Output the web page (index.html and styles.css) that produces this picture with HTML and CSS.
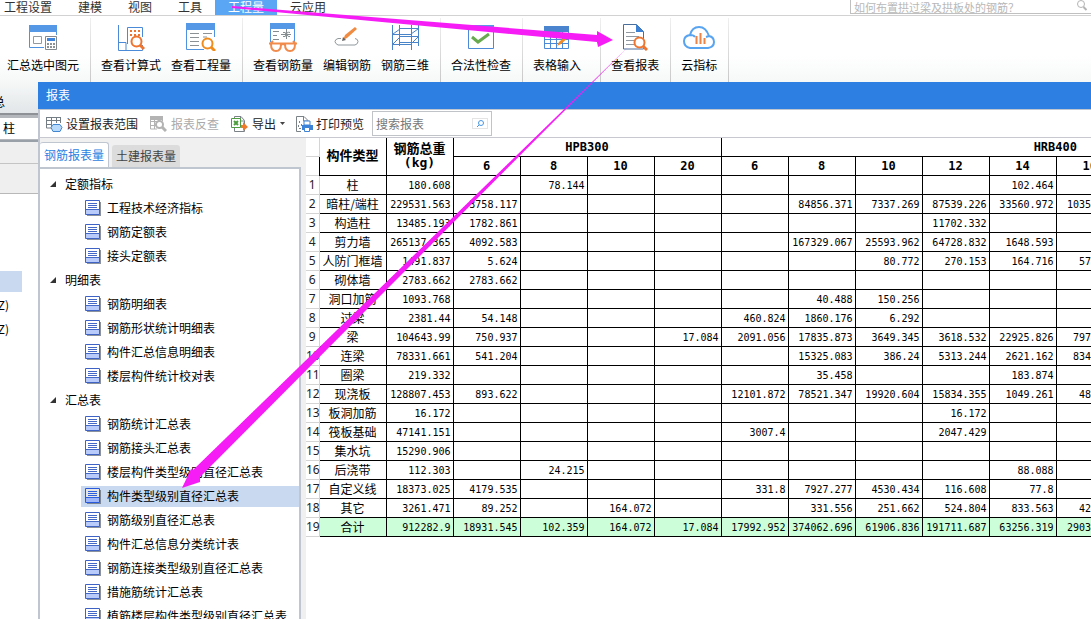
FILE: index.html
```html
<!DOCTYPE html>
<html lang="zh-CN">
<head>
<meta charset="utf-8">
<title>报表</title>
<link rel="stylesheet" href="styles.css">
</head>
<body>
<svg class="defs" aria-hidden="true">
  <symbol id="doc" viewBox="0 0 16 16"><path d="M2 2h14v14H2z" fill="#8d939d"/><path d="M.5.5h14v14H.5z" fill="#fff" stroke="#3f63c4"/><path d="M1 10h13v4H1z" fill="#b9cbfb"/><path d="M1 9.500h13M3 3.500h9M3 5.500h9M3 7.500h9" stroke="#4468c6"/></symbol>
</svg>
<div class="app">
  <header class="menubar">
    <nav class="menu">
      <button>工程设置</button><button>建模</button><button>视图</button><button>工具</button><button class="active">工程量</button><button>云应用</button>
    </nav>
    <div class="help-search">
      <input type="text" aria-label="帮助搜索" placeholder="如何布置拱过梁及拱板处的钢筋？">
      <svg width="12" height="12" viewBox="0 0 12 12" fill="none" stroke="#b4b4b4"><circle cx="5" cy="4" r="3.500"/><path d="M7.500 7l3 3" stroke-width="2"/></svg>
    </div>
  </header>

  <div class="ribbon">
    <div class="group">
      <button class="tool"><svg width="28" height="28" viewBox="0 0 28 28" fill="none"><path d="M.5 7v17.500H15M27.500 7v5" stroke="#4f92e0"/><path d="M0 2h28v7H0z" fill="#5598e6"/><path d="M4.500 13.500h8v7h-8z" stroke="#93999d"/><path d="M16.500 13.500h11v13h-11z" fill="#fff" stroke="#84898d"/><path d="M18 15h8v3h-8z" fill="#3f84dc"/><path d="M18 20h2v2h-2zm3 0h2v2h-2zm3 0h2v2h-2zm-6 3h2v2h-2zm3 0h2v2h-2zm3 0h2v2h-2z" fill="#8b9195"/></svg>汇总选中图元</button>
    </div>
    <div class="group">
      <button class="tool"><svg width="28" height="28" viewBox="0 0 28 28" fill="none"><path d="M1.500 2v25.500h24V22M1 19.500h8v8M10.500 21V4.500h15V14" stroke="#4a8ad6"/><path d="M13 7h2v2h-2zm4 0h2v2h-2zm4 0h2v2h-2zm-8 4h2v2h-2zm4 0h2v2h-2zm4 0h2v2h-2z" fill="#ee7530"/><circle cx="19.500" cy="18.500" r="5" fill="#fff" stroke="#ee7530" stroke-width="2"/><path d="M23 22l4 4" stroke="#ee7530" stroke-width="3"/></svg>查看计算式</button>
      <button class="tool"><svg width="30" height="28" viewBox="0 0 30 28" fill="none"><path d="M.5 6v20.500H18M28.500 6v8" stroke="#4f92e0"/><path d="M0 0h29v7H0z" fill="#5598e6"/><path d="M4 10.500h9M17 10.500h9M4 14.500h9M4 18.500h9M4 22.500h9M17 14h4" stroke="#8b9195"/><circle cx="21.500" cy="20.500" r="5" fill="#fff" stroke="#f08c1c" stroke-width="2"/><path d="M25 24l4 4" stroke="#f08c1c" stroke-width="3"/></svg>查看工程量</button>
    </div>
    <div class="group">
      <button class="tool"><svg width="30" height="30" viewBox="0 0 30 30" fill="none"><path d="M2.500 5v14M26.500 5v14" stroke="#4f92e0"/><path d="M2 0h25v6H2z" fill="#5598e6"/><path d="M5 8.500h6M5 12.500h4M5 16.500h6M13 11.500h10M18.500 6v10M15 9.500q3-1 3 2t-3 2M22 9.500q-4-1-3 2t3 2" stroke="#858c90"/><path d="M1 20.500h28M3 20l2-2M27 20l-2-2M3 21q0 7 5 7t5-7M17 21q0 7 5 7t5-7M13 22q2-2 4 0" stroke="#f08b4b" stroke-width="2"/></svg>查看钢筋量</button>
      <button class="tool"><svg width="28" height="28" viewBox="0 0 28 28" fill="none"><path d="M8 15.500H5q-3 1-3 3t3 3.500h17q3-1 3-3.500t-3-3" stroke="#90989c"/><path d="M10 17l2-5L22 4l2 2-10 9z" fill="#f08b42"/><path d="M9 18l1-4 3 3z" fill="#666"/></svg>编辑钢筋</button>
      <button class="tool"><svg width="28" height="28" viewBox="0 0 28 28" fill="none" stroke="#4a84c8"><path d="M1.500 2v25M8.500 2v21M20.500 2v25M27.500 2v21M9 5.500h19M1 11.500h20M8 13.500h20M1 21.500h20M8 19.500h20M2 11l7-5M20 11l7-5M2 21l7-7M20 21l7-7"/></svg>钢筋三维</button>
    </div>
    <div class="group">
      <button class="tool"><svg width="26" height="28" viewBox="0 0 26 28" fill="none"><path d="M.5 3.500h25v22H.5z" fill="#fff" stroke="#4a8ad6"/><path d="M0 2h26v4H0z" fill="#5598e6"/><path d="M4 14l6 5L21 11" stroke="#68a84e" stroke-width="3"/></svg>合法性检查</button>
    </div>
    <div class="group wide">
      <button class="tool"><svg width="26" height="28" viewBox="0 0 26 28" fill="none"><path d="M.5 4.500h24v21H.5zM1 12.500h23M1 16.500h23M1 20.500h23M6.500 8v17M12.500 8v17M18.500 8v17" stroke="#4a8ad6"/><path d="M0 3h25v6H0z" fill="#4a84cf"/><path d="M13 23l2-4 8-7 2 2-8 7z" fill="#f28c24"/></svg>表格输入</button>
    </div>
    <div class="group">
      <button class="tool"><svg width="26" height="28" viewBox="0 0 26 28" fill="none"><path d="M1.500 1.500h13l7 7V26H1.500z" fill="#fff" stroke="#4a6e9c"/><path d="M14 1v8h8z" fill="#3b80d2"/><path d="M4 9.500h9M4 13.500h13M4 17.500h8M4 21.500h8" stroke="#9299a0"/><circle cx="17.500" cy="19.500" r="5" fill="#fff" stroke="#ee7530" stroke-width="2"/><path d="M21 23l4 4" stroke="#ee7530" stroke-width="3"/></svg>查看报表</button>
    </div>
    <div class="group">
      <button class="tool"><svg width="32" height="28" viewBox="0 0 32 28" fill="none"><path d="M7 25q-6-1-6-7 0-5 6-6Q9 4 16 4t10 9q5 1 5 6t-6 6zM7 12q4 0 5 2M26 13l-3 1" stroke="#58a4f0" stroke-width="2"/><path d="M13.500 13v8M17.500 10v11M21.500 15v6" stroke="#f08344" stroke-width="2"/></svg>云指标</button>
    </div>
  </div>

  <div class="workspace">
    <aside class="side">
      <div class="side-top"><span class="cut">总</span></div>
      <div class="side-box">柱</div>
      <div class="side-head"></div>
      <div class="side-row"></div>
      <div class="side-list">
        <div class="side-mark"></div>
        <span class="cut">KZ)</span>
        <span class="cut">KZ)</span>
      </div>
    </aside>

    <main class="dialog">
      <h1 class="title">报表</h1>
      <div class="toolbar">
        <button><svg width="17" height="16" viewBox="0 0 17 16" fill="none"><path d="M.5 1v11H6M5.500 1v11M10.500 1v6M14.500 1v6M0 1.500h15M0 4.500h15M0 8.500h6" stroke="#757d84"/><path d="M7 8.500h7l2 3-2 4H7l-2-4z" fill="#b9dafb" stroke="#4187d2"/></svg>设置报表范围</button>
        <button disabled><svg width="17" height="16" viewBox="0 0 17 16" fill="none" stroke="#b3b3b3"><path d="M0 2h13" stroke-width="4"/><path d="M.5 1v12H7M4.500 1v12M8.500 1v4M12.500 1v4M0 5.500h8M0 9.500h6"/><circle cx="9.500" cy="8.500" r="3.500" fill="#fff" stroke-width="2"/><path d="M12 11l4 4" stroke-width="3"/></svg>报表反查</button>
        <button><svg width="17" height="16" viewBox="0 0 17 16" fill="none"><path d="M3.500 3V.5H10l3.500 4V9M3.500 12v3.500h10V13M9.500 1v4H13" stroke="#7a8288"/><path d="M.5 2.500h9v9h-9z" fill="#fff" stroke="#4e9d3e"/><path d="M3 5l4 4M7 5L3 9" stroke="#4e9d3e" stroke-width="2"/><path d="M10 9h2V6l5 5-5 4v-3h-2z" fill="#ee7a2b"/></svg>导出<svg class="caret" width="5" height="3" viewBox="0 0 5 3"><path d="M0 0h5L2.500 3z" fill="#444"/></svg></button>
        <button><svg width="17" height="16" viewBox="0 0 17 16" fill="none"><path d="M5 15.500H.5V.5H8l4 4V6M7.500 1v4H12" stroke="#7a8288"/><path d="M3 5h1v2H3zm2 3h1v2H5zM2 9h1v2H2zm1 3h2v1H3z" fill="#7a8288"/><path d="M8 5h6v4H8z" fill="#fff" stroke="#3c83d8"/><path d="M6 9h11v5H6z" fill="#3c83d8"/><path d="M8.500 11.500h5v4h-5z" fill="#fff" stroke="#3c83d8"/></svg>打印预览</button>
        <div class="search">
          <input type="text" aria-label="搜索报表" placeholder="搜索报表">
          <button class="go" aria-label="搜索"><svg width="9" height="9" viewBox="0 0 9 9" fill="none" stroke="#4a95e0"><circle cx="5" cy="4" r="2.500"/><path d="M3 6L1 8"/></svg></button>
        </div>
      </div>

      <div class="content">
        <section class="nav">
          <div class="tabs"><button class="on">钢筋报表量</button><button>土建报表量</button></div>
          <div class="tree">
            <button class="branch">定额指标</button>
            <button class="leaf"><svg><use href="#doc"/></svg>工程技术经济指标</button>
            <button class="leaf"><svg><use href="#doc"/></svg>钢筋定额表</button>
            <button class="leaf"><svg><use href="#doc"/></svg>接头定额表</button>
            <button class="branch">明细表</button>
            <button class="leaf"><svg><use href="#doc"/></svg>钢筋明细表</button>
            <button class="leaf"><svg><use href="#doc"/></svg>钢筋形状统计明细表</button>
            <button class="leaf"><svg><use href="#doc"/></svg>构件汇总信息明细表</button>
            <button class="leaf"><svg><use href="#doc"/></svg>楼层构件统计校对表</button>
            <button class="branch">汇总表</button>
            <button class="leaf"><svg><use href="#doc"/></svg>钢筋统计汇总表</button>
            <button class="leaf"><svg><use href="#doc"/></svg>钢筋接头汇总表</button>
            <button class="leaf"><svg><use href="#doc"/></svg>楼层构件类型级别直径汇总表</button>
            <button class="leaf selected"><svg><use href="#doc"/></svg>构件类型级别直径汇总表</button>
            <button class="leaf"><svg><use href="#doc"/></svg>钢筋级别直径汇总表</button>
            <button class="leaf"><svg><use href="#doc"/></svg>构件汇总信息分类统计表</button>
            <button class="leaf"><svg><use href="#doc"/></svg>钢筋连接类型级别直径汇总表</button>
            <button class="leaf"><svg><use href="#doc"/></svg>措施筋统计汇总表</button>
            <button class="leaf"><svg><use href="#doc"/></svg>植筋楼层构件类型级别直径汇总表</button>
          </div>
        </section>

        <section class="report">
          <table>
            <colgroup><col class="c-no"><col class="c-val" span="11"><col></colgroup>
            <thead>
              <tr><td class="no"></td><th rowspan="2" class="label">构件类型</th><th rowspan="2" class="label">钢筋总重<br>(kg)</th><th colspan="4">HPB300</th><th colspan="6" class="grade-wide">HRB400</th></tr>
              <tr><td class="no"></td><th>6</th><th>8</th><th>10</th><th>20</th><th>6</th><th>8</th><th>10</th><th>12</th><th>14</th><th class="edge-head">16</th></tr>
            </thead>
            <tbody>
              <tr><td class="no">1</td><td class="type">柱</td><td>180.608</td><td></td><td>78.144</td><td></td><td></td><td></td><td></td><td></td><td></td><td>102.464</td><td></td></tr>
              <tr><td class="no">2</td><td class="type">暗柱/端柱</td><td>229531.563</td><td>3758.117</td><td></td><td></td><td></td><td></td><td>84856.371</td><td>7337.269</td><td>87539.226</td><td>33560.972</td><td>1035</td></tr>
              <tr><td class="no">3</td><td class="type">构造柱</td><td>13485.193</td><td>1782.861</td><td></td><td></td><td></td><td></td><td></td><td></td><td>11702.332</td><td></td><td></td></tr>
              <tr><td class="no">4</td><td class="type">剪力墙</td><td>265137.365</td><td>4092.583</td><td></td><td></td><td></td><td></td><td>167329.067</td><td>25593.962</td><td>64728.832</td><td>1648.593</td><td></td></tr>
              <tr><td class="no">5</td><td class="type">人防门框墙</td><td>1491.837</td><td>5.624</td><td></td><td></td><td></td><td></td><td></td><td>80.772</td><td>270.153</td><td>164.716</td><td>57</td></tr>
              <tr><td class="no">6</td><td class="type">砌体墙</td><td>2783.662</td><td>2783.662</td><td></td><td></td><td></td><td></td><td></td><td></td><td></td><td></td><td></td></tr>
              <tr><td class="no">7</td><td class="type">洞口加筋</td><td>1093.768</td><td></td><td></td><td></td><td></td><td></td><td>40.488</td><td>150.256</td><td></td><td></td><td></td></tr>
              <tr><td class="no">8</td><td class="type">过梁</td><td>2381.44</td><td>54.148</td><td></td><td></td><td></td><td>460.824</td><td>1860.176</td><td>6.292</td><td></td><td></td><td></td></tr>
              <tr><td class="no">9</td><td class="type">梁</td><td>104643.99</td><td>750.937</td><td></td><td></td><td>17.084</td><td>2091.056</td><td>17835.873</td><td>3649.345</td><td>3618.532</td><td>22925.826</td><td>797</td></tr>
              <tr><td class="no">10</td><td class="type">连梁</td><td>78331.661</td><td>541.204</td><td></td><td></td><td></td><td></td><td>15325.083</td><td>386.24</td><td>5313.244</td><td>2621.162</td><td>834</td></tr>
              <tr><td class="no">11</td><td class="type">圈梁</td><td>219.332</td><td></td><td></td><td></td><td></td><td></td><td>35.458</td><td></td><td></td><td>183.874</td><td></td></tr>
              <tr><td class="no">12</td><td class="type">现浇板</td><td>128807.453</td><td>893.622</td><td></td><td></td><td></td><td>12101.872</td><td>78521.347</td><td>19920.604</td><td>15834.355</td><td>1049.261</td><td>48</td></tr>
              <tr><td class="no">13</td><td class="type">板洞加筋</td><td>16.172</td><td></td><td></td><td></td><td></td><td></td><td></td><td></td><td>16.172</td><td></td><td></td></tr>
              <tr><td class="no">14</td><td class="type">筏板基础</td><td>47141.151</td><td></td><td></td><td></td><td></td><td>3007.4</td><td></td><td></td><td>2047.429</td><td></td><td></td></tr>
              <tr><td class="no">15</td><td class="type">集水坑</td><td>15290.906</td><td></td><td></td><td></td><td></td><td></td><td></td><td></td><td></td><td></td><td></td></tr>
              <tr><td class="no">16</td><td class="type">后浇带</td><td>112.303</td><td></td><td>24.215</td><td></td><td></td><td></td><td></td><td></td><td></td><td>88.088</td><td></td></tr>
              <tr><td class="no">17</td><td class="type">自定义线</td><td>18373.025</td><td>4179.535</td><td></td><td></td><td></td><td>331.8</td><td>7927.277</td><td>4530.434</td><td>116.608</td><td>77.8</td><td></td></tr>
              <tr><td class="no">18</td><td class="type">其它</td><td>3261.471</td><td>89.252</td><td></td><td>164.072</td><td></td><td></td><td>331.556</td><td>251.662</td><td>524.804</td><td>833.563</td><td>42</td></tr>
              <tr class="total"><td class="no">19</td><td class="type">合计</td><td>912282.9</td><td>18931.545</td><td>102.359</td><td>164.072</td><td>17.084</td><td>17992.952</td><td>374062.696</td><td>61906.836</td><td>191711.687</td><td>63256.319</td><td>2903</td></tr>
            </tbody>
          </table>
        </section>
      </div>
    </main>
  </div>

  <svg class="arrows" width="640" height="500" viewBox="0 0 640 500" fill="#f51cf5" aria-hidden="true">
    <path d="M232 6L597 35V31L613 40 598 47 597 42 232 8z"/>
    <path d="M628 47L193 470 191 469 182 488 200 482 200 477z"/>
  </svg>
</div>
</body>
</html>
```

FILE: styles.css
```css
* { box-sizing: border-box; }

body {
  margin: 0;
  font: 12px/16px "Noto Sans CJK SC", sans-serif;
  color: #000;
  background: #fff;
}

button, input {
  font: inherit;
  color: inherit;
  border: 0;
  padding: 0;
  background: none;
}

button { white-space: nowrap; }
svg { flex: none; }
.defs { position: absolute; width: 0; height: 0; }

.app {
  position: relative;
  display: flex;
  flex-direction: column;
  height: 100vh;
  overflow: hidden;
}

/* Menu bar */
.menubar {
  display: flex;
  justify-content: space-between;
  flex: none;
  height: 16px;
  border-bottom: 1px solid #d2d2d2;
  color: #333;
}
.menu { display: flex; }
.menu button { height: 15px; padding: 0 13px 2px; line-height: 13px; }
.menu button:first-child { padding-left: 4px; }
.menu .active { background: #5ba5f5; color: #fff; }
.help-search {
  display: flex;
  width: 241px;
  height: 14px;
  padding: 0 3px;
  border: solid #c0c0c0;
  border-width: 0 0 1px 1px;
}
.help-search input { flex: 1; min-width: 0; height: 13px; font-size: 11px; }
input::placeholder { color: #b8b8b8; opacity: 1; }

/* Ribbon */
.ribbon {
  display: flex;
  flex: none;
  height: 66px;
  padding-top: 2px;
  background: linear-gradient(#fff 60%, #f6f8f8);
}
.group {
  display: flex;
  gap: 10px;
  padding: 0 11px 0 10px;
  border-right: 1px solid;
  border-image: linear-gradient(#f0f0f0, #c8c8c8) 1;
}
.group:first-child { padding-left: 7px; }
.group.wide { padding-right: 19px; }
.tool {
  display: flex;
  flex-direction: column;
  align-items: center;
  justify-content: space-between;
  height: 55px;
  padding-top: 5px;
}

/* Strip of the main window left of the dialog */
.workspace { display: flex; flex: 1; min-height: 0; }
.side { flex: none; width: 38px; }
.side-top {
  height: 33px;
  padding-top: 12px;
  background: linear-gradient(#f6f8f8, #e2e6e8);
  border-bottom: 2px solid #8e9296;
}
.cut { display: flex; justify-content: flex-end; width: 5px; overflow: hidden; }
.side-box {
  height: 25px;
  padding: 2px 3px;
  border: solid #b4b8bc;
  border-width: 3px 0 1px;
}
.side-head { height: 24px; background: #efeff0; border: solid #9aa0a8; border-width: 2px 0 1px; border-bottom-color: #c4c4c4; }
.side-row { height: 30px; background: #efeff0; border-bottom: 1px solid #b8b8b8; }
.side-list { display: flex; flex-direction: column; gap: 8px; padding-top: 77px; }
.side-list .cut { width: 9px; }
.side-mark { width: 22px; height: 21px; margin-bottom: -3px; background: #c9d9f0; }

/* Report dialog */
.dialog { display: flex; flex-direction: column; flex: 1; min-width: 0; }
.title {
  flex: none;
  margin: 0;
  height: 28px;
  padding-left: 8px;
  font-size: 12px;
  font-weight: 400;
  line-height: 26px;
  color: #fff;
  background: #2d7fe1;
  border-bottom: 1px solid #c0c6d0;
}
.toolbar {
  display: flex;
  align-items: center;
  flex: none;
  gap: 12px;
  height: 28px;
  padding-left: 6px;
  border-left: 2px solid #c0c6d0;
  border-bottom: 1px solid #c8c8d0;
}
.toolbar > button { display: flex; align-items: center; gap: 3px; height: 20px; color: #222; }
.toolbar > button:disabled { gap: 4px; color: #aaa; }
.toolbar > button:nth-child(3) { gap: 4px; margin-right: -1px; }
.search {
  display: flex;
  align-items: center;
  width: 120px;
  height: 25px;
  margin-left: -4px;
  padding: 3px;
  border: 1px solid #c0c4c8;
}
.search input { flex: 1; min-width: 0; }
.search input::placeholder { color: #777; }
.go { display: flex; align-items: center; justify-content: center; width: 16px; height: 11px; border: 1px solid #e4e4e4; }

.content { display: flex; flex: 1; min-height: 0; border-left: 2px solid #c0c6d0; }
.nav { display: flex; flex-direction: column; flex: none; width: 266px; padding: 4px 5px 0 0; background: #f0f0f0; }
.tabs { display: flex; align-items: flex-end; gap: 3px; height: 25px; }
.tabs button { width: 68px; height: 22px; border-radius: 3px 3px 0 0; background: #dcdcdc; color: #444; }
.tabs .on { width: 69px; height: 25px; background: #fff; color: #2d7fe1; border: 1px solid #c0c6d0; border-width: 1px 1px 0 0; }
.tree {
  flex: 1;
  min-height: 0;
  overflow: hidden;
  padding-top: 3px;
  background: #fff;
  border: solid #c0c6d0;
  border-width: 2px 2px 0 0;
}
.branch, .leaf { display: flex; align-items: center; height: 21px; margin: 2px 0 3px; padding-bottom: 2px; }
.branch { gap: 9px; padding-left: 10px; }
.branch::before { content: ""; border: solid transparent; border-width: 0 0 6px 6px; border-bottom-color: #333; }
.leaf { width: 218px; margin-left: 41px; padding-left: 4px; gap: 6px; }
.leaf svg { width: 16px; height: 16px; }
.selected { background: #c9d9f0; }
.selected svg { filter: brightness(0.9) saturate(1.5); }

/* Report table */
.report { flex: 1; min-width: 0; overflow: hidden; }
table { width: 100%; border-collapse: collapse; table-layout: fixed; }
.c-no { width: 13px; }
.c-val { width: 67px; }
th, td { height: 19px; padding: 0; border: 1px solid #000; white-space: nowrap; overflow: hidden; }
thead tr:first-child > * { height: 18px; border-top: 0; }
th { font: bold 12px/14px "DejaVu Sans Mono", "Noto Sans CJK SC", monospace; }
.label { font-size: 13px; }
td { padding: 2px 2px 0 0; font: 10px/14px "DejaVu Sans Mono", "Noto Sans CJK SC", monospace; text-align: right; }
td:last-child { padding-right: 0; }
th:last-child, td:last-child { border-right: 0; }
.type { padding: 0; font: 12px/16px "Noto Sans CJK SC", sans-serif; text-align: center; }
.no {
  padding: 0;
  border-color: #d4d4d4;
  border-left: 0;
  font: 12px/16px "Noto Sans", sans-serif;
  color: #222;
  text-align: center;
  overflow: visible;
}
thead .grade-wide { padding-right: 14px; text-align: right; }
.edge-head { padding-left: 26px; text-align: left; }
.total td:not(.no) { background: #ccffd9; }

.arrows { position: absolute; left: 0; top: 0; pointer-events: none; }
```
